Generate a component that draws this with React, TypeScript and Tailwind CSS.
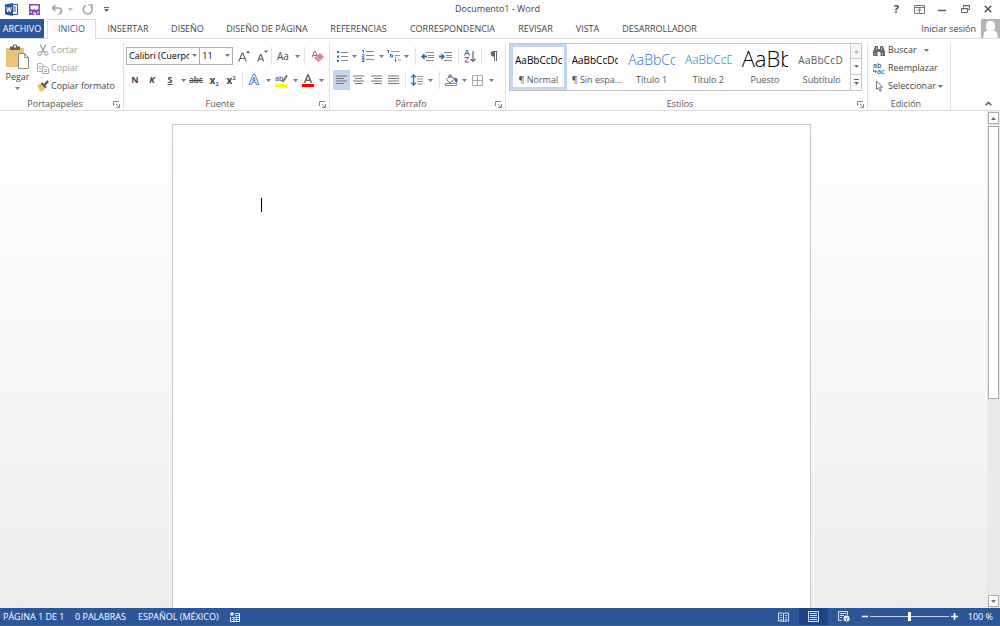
import React from 'react';

type Kids = { children?: React.ReactNode };

function Svg({ w, h, children, className = '' }: Kids & { w: number; h: number; className?: string }) {
  return (
    <svg width={w} height={h} viewBox={`0 0 ${w} ${h}`} fill="none" aria-hidden="true" className={`shrink-0 ${className}`}>
      {children}
    </svg>
  );
}

function Caret() {
  return (
    <Svg w={5} h={3}>
      <path d="M0 0h5L2.5 3z" fill="#777" />
    </Svg>
  );
}

function Tool({ label, width, children, active = false }: Kids & { label: string; width: string; active?: boolean }) {
  return (
    <button
      type="button"
      aria-label={label}
      title={label}
      className={`flex h-5 shrink-0 items-center justify-center ${width} ${active ? 'bg-[#c2d5f2]' : 'hover:bg-[#d5e1f2]'}`}
    >
      {children}
    </button>
  );
}

function More({ label }: { label: string }) {
  return (
    <Tool label={label} width="w-[6px]">
      <Caret />
    </Tool>
  );
}

function Sep({ className = '' }: { className?: string }) {
  return <span className={`h-[18px] w-px shrink-0 bg-[#e1e1e1] ${className}`} />;
}

function Group({ title, width, launcher = true, children }: Kids & { title: string; width: string; launcher?: boolean }) {
  return (
    <section aria-label={title} className={`flex shrink-0 flex-col pt-1 ${width}`}>
      <div className="flex flex-1 flex-col border-r border-[#e1e1e1]">
        <div className="flex-1">{children}</div>
        <div className="flex h-3 items-center pr-[3px] text-[#555]">
          <span className="flex-1 pr-[3px] text-center">{title}</span>
          {launcher && (
            <button type="button" aria-label={`Opciones de ${title}`}>
              <Svg w={7} h={7}>
                <path d="M.5 5V.5H6M3 3l3 3M6.500 3v3.500H3" stroke="#888" />
              </Svg>
            </button>
          )}
        </div>
      </div>
    </section>
  );
}

const tabs = [
  { name: 'INSERTAR', width: 'w-[64px]' },
  { name: 'DISEÑO', width: 'w-[55px]' },
  { name: 'DISEÑO DE PÁGINA', width: 'w-[104px]' },
  { name: 'REFERENCIAS', width: 'w-[79px]' },
  { name: 'CORRESPONDENCIA', width: 'w-[109px]' },
  { name: 'REVISAR', width: 'w-[57px]' },
  { name: 'VISTA', width: 'w-[47px]' },
  { name: 'DESARROLLADOR', width: 'w-[97px]' },
];

const styles = [
  { name: '¶ Normal', sample: 'AaBbCcDc', look: 'text-[10px] font-medium text-black', active: true },
  { name: '¶ Sin espa...', sample: 'AaBbCcDc', look: 'text-[10px] font-medium text-black' },
  { name: 'Título 1', sample: 'AaBbCc', look: 'text-[14px] font-light text-[#1a73c4]' },
  { name: 'Título 2', sample: 'AaBbCcD', look: 'text-[12px] font-light text-[#1a73c4]' },
  { name: 'Puesto', sample: 'AaBb', look: 'pb-1 text-[22px] font-light text-black' },
  { name: 'Subtítulo', sample: 'AaBbCcD', look: 'text-[10px] tracking-wide text-[#5a5a5a]' },
];

function TitleBar() {
  return (
    <header className="flex h-[18px] shrink-0 items-center">
      <div className="flex flex-1 items-center pl-[5px]">
        <Svg w={13} h={13}>
          <path d="M7 1.500h5.500v10H7" fill="#fff" stroke="#2b579a" />
          <path d="M8 4h3M8 6h3M8 8h3" stroke="#2b579a" />
          <path d="M0 1.500 8 0v13l-8-1.500z" fill="#2b579a" />
          <path d="m1.700 4 1 5 1.300-4.500L5.300 9l1-5" stroke="#fff" />
        </Svg>
        <button type="button" aria-label="Guardar" className="ml-[11px]">
          <Svg w={11} h={11}>
            <path d="M.8.8h9.400v9.400H.8z" stroke="#8446b0" strokeWidth="1.500" />
            <path d="M1 5.500h9v1.500H1z" fill="#8446b0" />
            <path d="M2.500 7h6v4h-6z" fill="#8446b0" />
            <path d="M4 8.500h3V11H5.500V9.500H4z" fill="#fff" />
          </Svg>
        </button>
        <button type="button" aria-label="Deshacer" className="ml-[11px] flex items-center gap-[5px]">
          <Svg w={12} h={11}>
            <path d="M4.500 1 1.300 4l3.200 3M1.500 4h5.700c2 0 3.300 1 3.300 2.700S9.500 9.500 7.500 10" stroke="#a5a5a5" strokeWidth="1.600" />
          </Svg>
          <Svg w={5} h={3}>
            <path d="M0 0h5L2.500 3z" fill="#bbb" />
          </Svg>
        </button>
        <button type="button" aria-label="Repetir" className="ml-[9px]">
          <Svg w={12} h={11}>
            <path d="M4 1.500A4.400 4.400 0 1 0 9 2.600M6.500 1H10v3.600" stroke="#a5a5a5" strokeWidth="1.600" />
          </Svg>
        </button>
        <button type="button" aria-label="Personalizar barra de acceso rápido" className="ml-[10px]">
          <Svg w={5} h={5}>
            <path d="M0 .5h5" stroke="#666" />
            <path d="M0 2h5L2.500 5z" fill="#666" />
          </Svg>
        </button>
      </div>
      <h1 className="pr-[2px] text-[#444]">Documento1 - Word</h1>
      <div className="flex flex-1 items-center justify-end pr-2">
        <button type="button" aria-label="Ayuda" className="mr-[15px] text-[11px] font-bold">?</button>
        <button type="button" aria-label="Opciones de la cinta" className="mr-[13px]">
          <Svg w={11} h={9}>
            <path d="M.5.5h10v8H.5zM.5 2.500h10M5.500 8V4M3.500 5.700l2-2 2 2" stroke="#777" />
          </Svg>
        </button>
        <button type="button" aria-label="Minimizar" className="mr-[15px]">
          <Svg w={8} h={9}>
            <path d="M0 5.500h8" stroke="#555" strokeWidth="1.500" />
          </Svg>
        </button>
        <button type="button" aria-label="Restaurar" className="mr-[14px]">
          <Svg w={9} h={8}>
            <path d="M2.500 2.500v-2h6v4h-2M2 .8h7M.5 3.500h6v4h-6zM0 3.800h7" stroke="#666" />
          </Svg>
        </button>
        <button type="button" aria-label="Cerrar">
          <Svg w={8} h={8}>
            <path d="m.7.7 6.600 6.600M7.300.7.7 7.300" stroke="#555" strokeWidth="1.500" />
          </Svg>
        </button>
      </div>
    </header>
  );
}

function Tabs() {
  return (
    <nav aria-label="Cinta de opciones" className="flex h-[21px] shrink-0 border-b border-[#dcdcdc] pt-px">
      <button type="button" className="h-[19px] w-11 shrink-0 whitespace-nowrap bg-[#2b579a] text-white">ARCHIVO</button>
      <button type="button" className="ml-[3px] h-5 w-[49px] shrink-0 border-x border-t border-[#dcdcdc] bg-white pb-px text-[#2b579a]">INICIO</button>
      {tabs.map((t) => (
        <button key={t.name} type="button" className={`shrink-0 whitespace-nowrap ${t.width}`}>
          {t.name}
        </button>
      ))}
      <button type="button" className="ml-auto flex items-center gap-[5px] whitespace-nowrap">
        <span>Iniciar sesión</span>
        <Svg w={19} h={19}>
          <path d="M0 0h19v19H0z" fill="#b5b5b5" />
          <rect x="5" y="2" width="9" height="10" rx="4" fill="#fff" />
          <path d="M2.500 19v-3c0-3 2-4.500 5-4.500h4c3 0 5 1.500 5 4.500v3z" fill="#fff" />
        </Svg>
      </button>
    </nav>
  );
}

function Clipboard() {
  return (
    <Group title="Portapapeles" width="w-[124px]">
      <div className="flex">
        <button type="button" className="flex w-[35px] flex-col items-center pt-[1px]">
          <Svg w={23} h={25}>
            <path d="M0 4h18v19H0z" fill="#ecc27a" />
            <path d="M4 2.500h3V.5h4v2h3V6H4z" fill="#5f5f5f" />
            <path d="M8 1.500h2v2H8z" fill="#fff" />
            <path d="M12.500 9.500h6l4 4v11h-10z" fill="#fff" stroke="#888" />
            <path d="M18.500 9.500v4h4" stroke="#888" />
          </Svg>
          <span className="mt-[1px] leading-[14px]">Pegar</span>
          <span className="flex h-2 items-center"><Caret /></span>
        </button>
        <div className="flex flex-col pl-[2px]">
          <button type="button" className="flex h-[18px] items-center gap-[2px] pb-1 text-[#a0a0a0]">
            <Svg w={12} h={12}>
              <path d="m3 .5 4.500 8M9 .5 4.500 8.500" stroke="#999" strokeWidth="1.300" />
              <circle cx="2.800" cy="9.500" r="1.800" stroke="#999" />
              <circle cx="9.200" cy="9.500" r="1.800" stroke="#999" />
            </Svg>
            Cortar
          </button>
          <button type="button" className="flex h-[18px] items-center gap-[2px] pb-1 text-[#a0a0a0]">
            <Svg w={12} h={11}>
              <path d="M5 8.500H.5v-8h4l2 2V3M5.500 3.500h4l2 2v5h-6z" stroke="#aaa" />
              <path d="M2 3.500h2M2 5.500h2M7 6.500h3M7 8.500h3" stroke="#aaa" />
            </Svg>
            Copiar
          </button>
          <button type="button" className="flex h-[18px] items-center gap-[2px] whitespace-nowrap pb-1">
            <Svg w={12} h={12}>
              <path d="m0 5.500 4-2 4.500 4.500L5 12 3 11z" fill="#ecbb72" />
              <path d="m4.500 3 4.500 4.500" stroke="#555" strokeWidth="2" />
              <path d="M7.500 5 11 1" stroke="#555" strokeWidth="2.200" />
            </Svg>
            Copiar formato
          </button>
        </div>
      </div>
    </Group>
  );
}

function FontGroup() {
  return (
    <Group title="Fuente" width="w-[206px]">
      <div className="flex flex-col gap-1 pl-[2px] pt-[3px]">
        <div className="flex h-5 items-center">
          <div className="relative h-[18px] w-[75px]">
            <select aria-label="Fuente" className="h-full w-full appearance-none overflow-hidden border border-[#ababab] bg-white pl-[2px] pr-[10px] font-medium text-black">
              <option>Calibri (Cuerpo)</option>
            </select>
            <span className="pointer-events-none absolute right-[3px] top-[7px]"><Caret /></span>
          </div>
          <div className="relative -ml-px h-[18px] w-[34px]">
            <select aria-label="Tamaño de fuente" className="h-full w-full appearance-none border border-[#ababab] bg-white pl-[2px] font-medium text-black">
              <option>11</option>
            </select>
            <span className="pointer-events-none absolute right-[3px] top-[7px]"><Caret /></span>
          </div>
          <Tool label="Aumentar tamaño" width="w-[22px]">
            <Svg w={12} h={12}>
              <path d="m.7 11.500 3.500-8.500h.6l3.500 8.500M2 8.500h5" stroke="#666" strokeWidth="1.200" />
              <path d="m8 3 2-2.500L12 3z" fill="#2b6cb0" />
            </Svg>
          </Tool>
          <Tool label="Disminuir tamaño" width="w-[14px]">
            <Svg w={11} h={12}>
              <path d="m.7 11.500 2.700-7h.6l2.700 7M1.800 9.200h4" stroke="#666" strokeWidth="1.200" />
              <path d="m7 .5 2 2.500 2-2.500z" fill="#2b6cb0" />
            </Svg>
          </Tool>
          <Sep className="ml-[2px]" />
          <Tool label="Cambiar mayúsculas" width="w-[22px]">
            <span className="text-[10px]">Aa</span>
          </Tool>
          <More label="Opciones de mayúsculas" />
          <Sep className="ml-[4px]" />
          <Tool label="Borrar formato" width="w-6">
            <Svg w={13} h={12}>
              <path d="m1 7.500 2.500-6.500h.6l2 5M2 5.500h3.500" stroke="#777" />
              <path d="m3 8 6-5 4 4-5.500 5z" fill="#e8798e" />
              <path d="m5 6.300 4 4" stroke="#fff" strokeWidth=".7" />
            </Svg>
          </Tool>
        </div>
        <div className="flex h-5 items-center">
          <Tool label="Negrita" width="w-[18px]"><b>N</b></Tool>
          <Tool label="Cursiva" width="w-4"><b className="italic">K</b></Tool>
          <Tool label="Subrayado" width="w-5"><b className="underline underline-offset-1">S</b></Tool>
          <More label="Opciones de subrayado" />
          <Tool label="Tachado" width="w-5"><span className="text-[8px] font-semibold line-through">abc</span></Tool>
          <Tool label="Subíndice" width="w-4">
            <b className="text-[10px]">x</b><span className="mt-2 text-[6px] font-bold text-[#2b6cb0]">2</span>
          </Tool>
          <Tool label="Superíndice" width="w-[18px]">
            <b className="text-[10px]">x</b><span className="mb-1 text-[6px] font-bold text-[#2b6cb0]">2</span>
          </Tool>
          <Sep className="ml-[2px]" />
          <Tool label="Efectos de texto" width="w-[22px]">
            <Svg w={12} h={12}>
              <path d="m1 10.500 4-10h2l4 10H8.500l-.8-2.300H4.300l-.8 2.300zM6 3.300 4.800 6.500h2.400z" stroke="#4a83c6" fill="#e8f1fb" />
            </Svg>
          </Tool>
          <More label="Opciones de efectos" />
          <Tool label="Color de resaltado" width="w-[21px]">
            <Svg w={13} h={13}>
              <text x="0" y="7" fontSize="7" fill="#555" fontWeight="600">ab</text>
              <path d="m12 1.500-4.500 6.500" stroke="#666" strokeWidth="1.800" />
              <path d="M0 10h12v3H0z" fill="#ff0" />
            </Svg>
          </Tool>
          <More label="Opciones de resaltado" />
          <Tool label="Color de fuente" width="w-[20px]">
            <Svg w={12} h={13}>
              <path d="m2.500 9 3.200-8h.6l3.200 8M3.700 6.300h4.600" stroke="#666" strokeWidth="1.500" />
              <path d="M0 10h12v3H0z" fill="#f00" />
            </Svg>
          </Tool>
          <More label="Opciones de color" />
        </div>
      </div>
    </Group>
  );
}

function AlignIcon({ d }: { d: string }) {
  return (
    <Svg w={11} h={10}>
      <path d={d} stroke="#777" />
    </Svg>
  );
}

function Paragraph() {
  return (
    <Group title="Párrafo" width="w-[176px]">
      <div className="flex flex-col gap-1 pl-[3px] pt-[3px]">
        <div className="flex h-5 items-center">
          <Tool label="Viñetas" width="w-[18px]">
            <Svg w={11} h={11}>
              <path d="M0 0h2v2H0zM0 4.500h2v2H0zM0 9h2v2H0z" fill="#2b6cb0" />
              <path d="M4 1.500h7M4 5.500h7M4 9.500h7" stroke="#888" />
            </Svg>
          </Tool>
          <More label="Opciones de viñetas" />
          <Tool label="Numeración" width="w-[21px]">
            <Svg w={12} h={12}>
              <path d="M1.500 0v3M0 .5h1.500M0 4.500h2v1l-2 1.500h2.500M0 8.500h2v3H0M0 10h2" stroke="#2b6cb0" strokeWidth=".9" />
              <path d="M4 1.500h8M4 5.500h8M4 9.500h8" stroke="#888" />
            </Svg>
          </Tool>
          <More label="Opciones de numeración" />
          <Tool label="Lista multinivel" width="w-[19px]">
            <Svg w={14} h={12}>
              <path d="M1.500 0v3M0 .5h1.500M3.500 4v3h2V5h-2M8.500 7v1M8.500 9v3" stroke="#2b6cb0" />
              <path d="M4 1.500h9M8 5.500h5M11 10h3" stroke="#999" />
            </Svg>
          </Tool>
          <More label="Opciones de lista" />
          <Sep className="ml-[6px]" />
          <Tool label="Disminuir sangría" width="w-[22px]">
            <Svg w={13} h={9}>
              <path d="M5 .5h8M7 3.500h6M7 5.500h6M5 8.500h8" stroke="#888" />
              <path d="M0 4.500 3.500 1v2.500h2.500v2H3.500V8z" fill="#2b6cb0" />
            </Svg>
          </Tool>
          <Tool label="Aumentar sangría" width="w-[14px]">
            <Svg w={13} h={9}>
              <path d="M5 .5h8M7 3.500h6M7 5.500h6M5 8.500h8" stroke="#888" />
              <path d="M6 4.500 2.500 1v2.500H0v2h2.500V8z" fill="#2b6cb0" />
            </Svg>
          </Tool>
          <Sep className="ml-[6px]" />
          <Tool label="Ordenar" width="w-[22px]">
            <Svg w={12} h={13}>
              <path d="M.5 5.500 2.800 0h.4l2.300 5.500M1.500 3.500h3" stroke="#2b6cb0" />
              <path d="M.5 7.500h4.300L.8 12h4.400" stroke="#8446b0" />
              <path d="M9 1v10M6.500 9 9 11.500 11.500 9" stroke="#666" strokeWidth="1.200" />
            </Svg>
          </Tool>
          <Sep />
          <Tool label="Mostrar todo" width="w-[22px]">
            <Svg w={9} h={10}>
              <path d="M4 0h4.500v1H8v9H7V1H6v9H5V5.500a2.700 2.700 0 0 1-1-5.500z" fill="#666" />
            </Svg>
          </Tool>
        </div>
        <div className="flex h-5 items-center">
          <Tool label="Alinear a la izquierda" width="w-[17px]" active><AlignIcon d="M0 1h11M0 3.500h8M0 6h11M0 8.500h8" /></Tool>
          <Tool label="Centrar" width="w-[17px]"><AlignIcon d="M0 1h11M2 3.500h7M0 6h11M2 8.500h7" /></Tool>
          <Tool label="Alinear a la derecha" width="w-[18px]"><AlignIcon d="M0 1h11M3 3.500h8M0 6h11M3 8.500h8" /></Tool>
          <Tool label="Justificar" width="w-[17px]"><AlignIcon d="M0 1h11M0 3.500h11M0 6h11M0 8.500h11" /></Tool>
          <Sep className="ml-[3px]" />
          <Tool label="Interlineado" width="w-[22px]">
            <Svg w={12} h={12}>
              <path d="M2.500 1v10M.3 3.300 2.500 1l2.200 2.300M.3 8.700 2.500 11l2.200-2.300" stroke="#2b6cb0" strokeWidth="1.300" />
              <path d="M6 2.500h6M6 5h6M6 7.500h6M6 10h6" stroke="#888" strokeWidth=".9" />
            </Svg>
          </Tool>
          <Tool label="Opciones de interlineado" width="w-[5px]"><Caret /></Tool>
          <Sep className="ml-[6px]" />
          <Tool label="Sombreado" width="w-[22px]">
            <Svg w={13} h={12}>
              <path d="m5.500 1.500-4 4L5 9l4.500-4zM4 4V1.500C4 .5 6 .5 6 1.500V4" stroke="#666" />
              <path d="M9 3.500c3 0 4.500 2 3 5.500C10 8.500 10 6 9 3.500z" fill="#2b6cb0" />
              <path d="M.5 9.500h11v2H.5z" fill="#fff" stroke="#888" />
            </Svg>
          </Tool>
          <Tool label="Opciones de sombreado" width="w-[5px]"><Caret /></Tool>
          <Tool label="Bordes" width="w-[21px]">
            <Svg w={11} h={11}>
              <path d="M.5.5h10v10H.5zM5.500 1v9M1 5.500h9" stroke="#aaa" />
            </Svg>
          </Tool>
          <More label="Opciones de bordes" />
        </div>
      </div>
    </Group>
  );
}

function Styles() {
  return (
    <Group title="Estilos" width="w-[362px]">
      <div className="ml-[3px] mr-[5px] flex h-[48px] border border-[#c6c6c6] bg-white">
        <div className="grid min-w-0 flex-1 grid-cols-6">
          {styles.map((s) => (
            <button
              key={s.name}
              type="button"
              className={`flex min-w-0 flex-col items-stretch border-[3px] px-[2px] ${s.active ? 'border-[#c2d5f2]' : 'border-transparent'}`}
            >
              <span className={`flex h-[26px] items-center overflow-hidden whitespace-nowrap text-left leading-none ${s.look}`}>{s.sample}</span>
              <span className="whitespace-nowrap text-center leading-[14px] text-[#555]">{s.name}</span>
            </button>
          ))}
        </div>
        <div className="grid w-[11px] shrink-0 grid-rows-3 divide-y divide-[#c6c6c6] border-l border-[#c6c6c6]">
          <button type="button" aria-label="Fila anterior" className="flex items-center justify-center bg-[#f5f5f5]">
            <Svg w={5} h={3}><path d="M0 3h5L2.500 0z" fill="#bbb" /></Svg>
          </button>
          <button type="button" aria-label="Fila siguiente" className="flex items-center justify-center"><Caret /></button>
          <button type="button" aria-label="Más estilos" className="flex items-center justify-center">
            <Svg w={5} h={6}><path d="M0 .5h5" stroke="#666" /><path d="M0 3h5L2.500 6z" fill="#666" /></Svg>
          </button>
        </div>
      </div>
    </Group>
  );
}

function Editing() {
  return (
    <Group title="Edición" width="w-[83px]" launcher={false}>
      <div className="flex flex-col items-start pl-[5px]">
        <button type="button" className="flex h-[18px] items-center gap-[3px] pb-1">
          <Svg w={12} h={11}>
            <path d="M2 1h3v3h2V1h3l2 6v4H7.500V7h-3v4H0V7z" fill="#666" />
            <path d="M3.500 2v3M8.500 2v3M2 8v2M9.500 8v2" stroke="#ccc" strokeWidth=".8" />
          </Svg>
          <span>Buscar</span>
          <span className="ml-[4px]"><Caret /></span>
        </button>
        <button type="button" className="flex h-[18px] items-center gap-[2px] whitespace-nowrap pb-1">
          <Svg w={13} h={13}>
            <text x="0" y="6" fontSize="7" fontWeight="600" fill="#555">ab</text>
            <text x="4" y="12" fontSize="7" fontWeight="600" fill="#2b6cb0">ac</text>
            <path d="M.5 7.500v2H3M2 8l1.500 1.500L2 11" stroke="#2b6cb0" strokeWidth=".9" />
          </Svg>
          Reemplazar
        </button>
        <button type="button" className="flex h-[18px] items-center gap-[2px] whitespace-nowrap pb-1">
          <Svg w={13} h={12}>
            <path d="M3.500 1v8.500l2-1.800 1.500 3.500 1.300-.6-1.500-3.400h2.700z" stroke="#777" />
          </Svg>
          Seleccionar
          <Caret />
        </button>
      </div>
    </Group>
  );
}

function StatusBar() {
  return (
    <footer className="flex h-[18px] shrink-0 items-center whitespace-nowrap border-b border-[#3a6a78] bg-[#2b579a] pl-[3px] pr-[7px] text-white">
      <button type="button" className="w-[72px] text-left">PÁGINA 1 DE 1</button>
      <button type="button" className="w-[63px] text-left">0 PALABRAS</button>
      <button type="button" className="w-[92px] text-left">ESPAÑOL (MÉXICO)</button>
      <button type="button" aria-label="Macros">
        <Svg w={10} h={10}>
          <circle cx="2" cy="2" r="1.800" fill="#fff" />
          <path d="M5 1.500h4.500v8h-9V5" stroke="#fff" />
          <path d="M5 3.500h4M2 5.500h7M2 7.500h7M4 5v4M6.500 3v6" stroke="#dbe5f3" strokeWidth=".8" />
        </Svg>
      </button>
      <div className="ml-auto flex h-full items-center">
        <button type="button" aria-label="Modo de lectura" className="flex h-full w-[31px] items-center justify-center">
          <Svg w={11} h={10}>
            <path d="M.5 1h4l1 1 1-1h4v8h-4l-1 1-1-1h-4zM5.500 2v8" stroke="#dbe5f3" />
            <path d="M2 3.500h2M2 5.500h2M2 7.500h2M7 3.500h2M7 5.500h2M7 7.500h2" stroke="#dbe5f3" strokeWidth=".8" />
          </Svg>
        </button>
        <button type="button" aria-label="Diseño de impresión" className="flex h-full w-[29px] items-center justify-center bg-[#1d4585]">
          <Svg w={11} h={11}>
            <path d="M.5.5h10v10H.5zM2 2.500h7M2 4.500h7M2 6.500h7M2 8.500h7" stroke="#dbe5f3" />
          </Svg>
        </button>
        <button type="button" aria-label="Diseño web" className="flex h-full w-[31px] items-center justify-center">
          <Svg w={12} h={11}>
            <path d="M4 9.500H.5v-9h9V4M2 2.500h6M2 4.500h4M2 6.500h2" stroke="#dbe5f3" />
            <circle cx="8.500" cy="7.500" r="3" fill="#fff" />
            <path d="m7 7 1.500 1L10 6.500M8.500 8v2" stroke="#2b579a" strokeWidth=".8" />
          </Svg>
        </button>
        <button type="button" aria-label="Alejar" className="ml-[3px]">
          <Svg w={6} h={7}><path d="M0 3.500h6" stroke="#fff" strokeWidth="1.600" /></Svg>
        </button>
        <input
          type="range"
          aria-label="Zoom"
          min={0}
          max={200}
          defaultValue={100}
          className="mx-[2px] h-3 w-[79px] appearance-none bg-transparent [&::-webkit-slider-runnable-track]:h-px [&::-webkit-slider-runnable-track]:bg-[#c4d2e8] [&::-webkit-slider-thumb]:-mt-1 [&::-webkit-slider-thumb]:h-[9px] [&::-webkit-slider-thumb]:w-[3px] [&::-webkit-slider-thumb]:appearance-none [&::-webkit-slider-thumb]:bg-white"
        />
        <button type="button" aria-label="Acercar">
          <Svg w={7} h={7}><path d="M0 3.500h7M3.500 0v7" stroke="#fff" strokeWidth="1.600" /></Svg>
        </button>
        <button type="button" className="w-[35px] text-right">100 %</button>
      </div>
    </footer>
  );
}

export default function App() {
  return (
    <div className="flex h-screen flex-col overflow-hidden bg-white font-['Open_Sans','Noto_Sans',sans-serif] text-[9px] leading-3 text-[#444]">
      <TitleBar />
      <Tabs />
      <div className="flex h-[72px] shrink-0 border-b border-[#dcdcdc]">
        <Clipboard />
        <FontGroup />
        <Paragraph />
        <Styles />
        <Editing />
        <button type="button" aria-label="Contraer la cinta" className="ml-auto self-end px-2 pb-1">
          <Svg w={7} h={5}><path d="m.7 4.300 2.800-3 2.800 3" stroke="#555" strokeWidth="1.500" /></Svg>
        </button>
      </div>
      <main className="flex min-h-0 flex-1 bg-linear-to-b from-white to-[#eeeeee]">
        <div className="flex min-w-0 flex-1 justify-center pr-1 pt-[13px]">
          <article role="textbox" aria-label="Documento" className="w-[639px] border border-b-0 border-[#c9c9c9] bg-white pl-[88px] pt-[73px]">
            <span className="block h-[14px] w-px bg-black" />
          </article>
        </div>
        <div className="flex w-[13px] shrink-0 flex-col gap-[2px] bg-[#e9e9e9] px-px py-px">
          <button type="button" aria-label="Subir" className="flex h-3 items-center justify-center border border-[#ababab] bg-white">
            <Svg w={5} h={3}><path d="M0 3h5L2.500 0z" fill="#666" /></Svg>
          </button>
          <div className="h-[273px] border border-[#ababab] bg-white" />
          <button type="button" aria-label="Bajar" className="mt-auto flex h-3 items-center justify-center border border-[#ababab] bg-white">
            <Caret />
          </button>
        </div>
      </main>
      <StatusBar />
    </div>
  );
}
